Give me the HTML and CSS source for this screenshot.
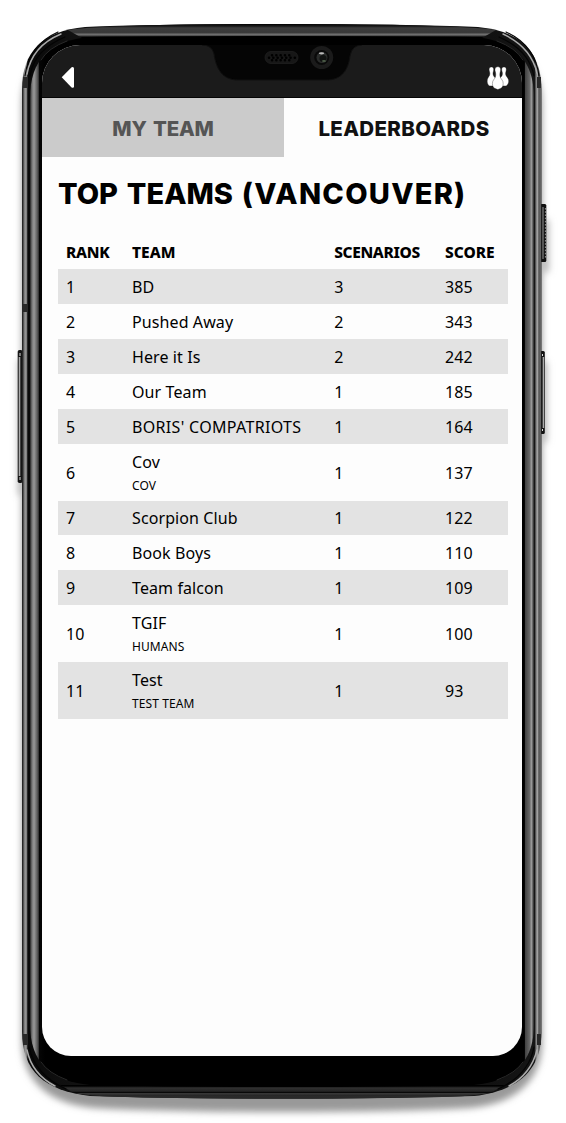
FILE: index.html
```html
<!DOCTYPE html>
<html lang="en">
<head>
<meta charset="utf-8">
<title>Leaderboards</title>
<link rel="stylesheet" href="styles.css">
</head>
<body>
<div class="phone">
  <svg class="frame" viewBox="0 0 566 1123" aria-hidden="true">
    <defs>
      <linearGradient id="rim" gradientUnits="userSpaceOnUse" x1="22" x2="542" y1="0" y2="0">
        <stop offset="0" stop-color="#111"/><stop offset=".003" stop-color="#555"/><stop offset=".006" stop-color="#9a9a9a"/><stop offset=".0095" stop-color="#777"/><stop offset=".011" stop-color="#0a0a0a"/><stop offset=".1" stop-color="#111"/>
        <stop offset=".9" stop-color="#111"/><stop offset=".986" stop-color="#151515"/><stop offset=".988" stop-color="#666"/><stop offset=".991" stop-color="#aaa"/><stop offset=".994" stop-color="#555"/><stop offset=".997" stop-color="#666"/><stop offset="1" stop-color="#080808"/>
      </linearGradient>
      <linearGradient id="glass" gradientUnits="userSpaceOnUse" x1="30" x2="534" y1="0" y2="0">
        <stop offset="0" stop-color="#222"/><stop offset=".004" stop-color="#777"/><stop offset=".008" stop-color="#999"/><stop offset=".014" stop-color="#606060"/><stop offset=".0165" stop-color="#444"/><stop offset=".0185" stop-color="#050505"/><stop offset=".03" stop-color="#000"/>
        <stop offset=".97" stop-color="#000"/><stop offset=".981" stop-color="#000"/><stop offset=".983" stop-color="#444"/><stop offset=".991" stop-color="#666"/><stop offset=".995" stop-color="#999"/><stop offset=".998" stop-color="#555"/><stop offset="1" stop-color="#222"/>
      </linearGradient>
      <linearGradient id="top" gradientUnits="userSpaceOnUse" x1="0" x2="0" y1="24" y2="37">
        <stop offset="0" stop-color="#000"/><stop offset=".2" stop-color="#222"/><stop offset=".3" stop-color="#3d3d3d"/><stop offset=".65" stop-color="#383838"/><stop offset=".8" stop-color="#707070"/><stop offset=".92" stop-color="#444"/><stop offset="1" stop-color="#000"/>
      </linearGradient>
      <linearGradient id="bottom" gradientUnits="userSpaceOnUse" x1="0" x2="0" y1="1086" y2="1099">
        <stop offset="0" stop-color="#000"/><stop offset=".15" stop-color="#303030"/><stop offset=".4" stop-color="#242424"/><stop offset=".5" stop-color="#080808"/><stop offset=".58" stop-color="#383838"/><stop offset=".78" stop-color="#222"/><stop offset=".85" stop-color="#353535"/><stop offset="1" stop-color="#000"/>
      </linearGradient>
      <filter id="soft" x="-10%" y="-10%" width="120%" height="120%"><feGaussianBlur stdDeviation="3.5"/></filter>
    </defs>
    <path class="shadow" filter="url(#soft)" d="M22 104C22 66 45 43 85 39H479C519 43 542 66 542 104V1042C542 1080 516 1104 470 1108Q400 1112 282 1112T94 1108C48 1104 22 1080 22 1042Z"/>
    <g class="button-shadow" filter="url(#soft)"><path d="M18 360h6v135h-6zM540 220h9v52h-9zM540 362h7v80h-7z"/></g>
    <g>
      <rect x="17.7" y="350" width="5" height="133" rx="1.8" fill="#151515"/><path d="M19.5 357v119" stroke="#aaa" stroke-width="1.6"/><path d="M20 353v3M20 477v3" stroke="#ddd"/>
      <rect x="540" y="204" width="6.3" height="58" rx="1.5" fill="#111"/><path d="M543 207v52" stroke="#555" stroke-width="2"/><path d="M545.4 208v51" stroke="#999" stroke-dasharray="1.6 1.6"/>
      <rect x="540" y="351" width="4.8" height="83" rx="1.5" fill="#111"/><path d="M543.4 357v71" stroke="#aaa" stroke-width="1.5"/><path d="M542.5 354v2M542.5 429v2" stroke="#ddd"/>
    </g>
    <path fill="url(#rim)" d="M22 90C22 52 42 31 85 27Q155 24 282 24T478 27C521 31 541.5 52 541.5 90V1032C541.5 1070 518 1091 474 1096Q400 1098.5 282 1098.5T90 1096C44 1091 22 1070 22 1032Z"/>
    <path fill="url(#top)" d="M68 30Q110 24 282 24T496 30L482 38H82Z"/>
    <path fill="url(#bottom)" d="M60 1085H505L490 1093Q474 1096 450 1096.7Q390 1098.5 282 1098.5T115 1096.7Q90 1096 74 1093Z"/>
    <path fill="url(#glass)" d="M30 98C30 60 50 40 90 37Q155 36 282 36T474 37C514 40 534 60 534 98V1024C534 1062 514 1081 474 1085Q400 1087 282 1087T90 1085C50 1081 30 1062 30 1024Z"/>
    <g fill="none" stroke-linecap="round">
      <path class="shine" d="M27 74Q32 46 61 34M503 34Q531 47 537 73M27 1050Q32 1074 55 1086M537 1050Q531 1074 509 1086"/>
      <path class="groove" d="M25 76Q29 45 58 32M506 32Q535 45 539 76M30 76Q34 50 65 37M499 37Q529 50 534 76M29 1047Q35 1075 66 1089M534 1047Q529 1075 498 1089"/>
      <path class="reflect" d="M41 60Q48 48 67 41M523 60Q516 48 497 41M41 1062Q48 1073 67 1080M523 1062Q516 1073 497 1080"/>
    </g>
    <path fill="#292929" d="M23 77h4v11h-4zM537 77h4v11h-4zM23 1034h4v11h-4zM537 1034h4v11h-4zM23 304h4v8h-4z"/>
  </svg>
  <main class="screen">
    <header class="bar">
      <svg class="back" viewBox="0 0 14 23" aria-label="Back"><path d="M.7 11.3L10.6 1.2Q13 .4 13 2.6V20.2Q13 22.4 10.6 21.4Z"/></svg>
      <svg class="pins" viewBox="0 0 22 24" aria-label="Teams">
        <g fill="#fff" stroke="#1b1b1b" stroke-width=".35">
          <path d="M4.4.9C2.2.9 1.8 3 2.3 5C3 7 3 8 2.5 9.4C1.6 11.3 .2 12 .2 15.2C.2 17.7 1.2 19.4 2.6 19.9H7.5C9 19 9.5 17 9.5 15C9.5 12 7.2 11.4 6.4 9.4C5.8 8 5.9 7 6.5 5C7 3 6.6.9 4.4.9Z"/>
          <path d="M17 .9C14.8.9 14.4 3 14.9 5C15.6 7 15.6 8 15.1 9.4C14.2 11.3 12.1 12 12.1 15.2C12.1 17.7 13.4 19.4 14.5 19.9H19.2C20.7 19.2 21.7 17 21.7 15C21.7 12 19.8 11.4 19 9.4C18.4 8 18.5 7 19.1 5C19.6 3 19.2.9 17 .9Z"/>
          <path d="M10.8.7C8.1.7 7.6 3 8.2 5.3C8.9 7.5 8.9 9.3 8.4 11C7.5 13.4 5.4 14.2 5.4 17.5C5.4 20 6.4 21.6 7.6 22.2L10.8 23.6L14 22.2C15.2 21.6 16.2 20 16.2 17.5C16.2 14.2 14.1 13.4 13.2 11C12.7 9.3 12.7 7.5 13.4 5.3C14 3 13.5.7 10.8.7Z"/>
        </g>
      </svg>
      <svg class="notch" viewBox="0 0 160 36" aria-hidden="true">
        <path fill="#050505" stroke="#101010" d="M0 0Q10 0 12 9C14 23 20 35 36 35H124C140 35 146 25 148 11Q150 0 160 0V-2H0Z"/>
        <rect x="63" y="6.5" width="33" height="12" rx="6" fill="#171717" stroke="#222" stroke-width=".7"/>
        <path d="M70 10.3h20M67 12.8h26M70 15.3h20" stroke="#000" stroke-width="2.5" stroke-linecap="round" stroke-dasharray=".1 4.2"/>
        <circle cx="119.7" cy="12.5" r="11.5" fill="#1b1b1b"/><circle cx="119.7" cy="12.5" r="7.5" fill="#090909"/><circle cx="120" cy="12.5" r="5.5" fill="#2b2d2c"/><circle cx="121" cy="13.5" r="3.5" fill="#101211"/><ellipse cx="119.5" cy="8.3" rx="2.7" ry="1.1" fill="#bbb"/><ellipse cx="122" cy="16" rx="2" ry="1.1" fill="#4c5d48"/>
      </svg>
    </header>
    <nav class="tabs"><div class="tab"><span class="my">MY TEAM</span></div><div class="tab active"><span class="lead">LEADERBOARDS</span></div></nav>
    <section class="content">
      <h1 class="title"><span>TOP TEAMS <span class="city">(VANCOUVER)</span></span></h1>
      <div class="row head"><span class="h-rank">RANK</span><span class="h-team">TEAM</span><span class="h-scen">SCENARIOS</span><span class="h-score">SCORE</span></div>
      <div class="row first"><span>1</span><span>BD</span><span>3</span><span>385</span></div>
      <div class="row"><span>2</span><span>Pushed Away</span><span>2</span><span>343</span></div>
      <div class="row"><span>3</span><span>Here it Is</span><span>2</span><span>242</span></div>
      <div class="row"><span>4</span><span>Our Team</span><span>1</span><span>185</span></div>
      <div class="row"><span>5</span><span class="caps">BORIS' COMPATRIOTS</span><span>1</span><span>164</span></div>
      <div class="row tall"><span>6</span><span class="team">Cov<small>COV</small></span><span>1</span><span>137</span></div>
      <div class="row"><span>7</span><span>Scorpion Club</span><span>1</span><span>122</span></div>
      <div class="row"><span>8</span><span>Book Boys</span><span>1</span><span>110</span></div>
      <div class="row"><span>9</span><span>Team falcon</span><span>1</span><span>109</span></div>
      <div class="row tall"><span>10</span><span class="team">TGIF<small>HUMANS</small></span><span>1</span><span>100</span></div>
      <div class="row tall"><span>11</span><span class="team">Test<small>TEST TEAM</small></span><span>1</span><span>93</span></div>
    </section>
  </main>
</div>
</body>
</html>
```
FILE: styles.css
```css
* { box-sizing: border-box; }
body { margin: 0; background: #fff; color: #000; font-family: "Noto Sans", sans-serif; }
.phone { position: relative; width: 566px; height: 1123px; padding: 45px 44px 67px 42px; overflow: hidden; }
.frame { position: absolute; inset: 0; width: 566px; height: 1123px; }
.shadow { fill: #999; }
.button-shadow { fill: #bbb; }
.shine { stroke: #aaa; stroke-width: 1.5; }
.groove { stroke: #050505; stroke-width: 1.2; }
.reflect { stroke: #292929; stroke-width: 1; }
.screen { position: relative; height: 1011px; background: #fdfdfd; border-radius: 38px 38px 29px 29px; overflow: hidden; }
.bar { position: relative; display: flex; justify-content: space-between; height: 53px; padding: 21px 13.5px 0 19px; background: #1b1b1b; border-bottom: 1px solid #050505; }
.back { width: 14px; height: 23px; fill: #fff; }
.pins { width: 22px; height: 24px; }
.notch { position: absolute; left: 160px; top: 0; width: 160px; height: 36px; }
.tabs { display: flex; height: 59px; }
.tab { flex: 0 0 242px; display: flex; align-items: center; justify-content: center; background: #cbcbcb; color: #555; font-family: Inter, sans-serif; font-size: 20.5px; font-weight: 800; line-height: 27px; padding-top: 2px; }
.active { flex: 1; background: #fdfdfd; color: #111; }
.my { letter-spacing: -.2px; word-spacing: 2px; }
.lead { letter-spacing: .35px; padding-left: 2px; }
.content { padding: 0 14px 0 16px; }
.title { display: flex; align-items: center; height: 72px; margin: 0; padding-top: 1px; color: #000; font-family: Inter, sans-serif; font-size: 29px; font-weight: 800; line-height: 40px; letter-spacing: 0; word-spacing: 2.5px; white-space: nowrap; }
.city { letter-spacing: 1.25px; }
.row { display: grid; grid-template-columns: 66px 202.2px 110.8px 1fr; align-items: center; height: 34.8px; padding: .8px 0 0 8px; font-size: 16px; line-height: 24px; letter-spacing: .1px; white-space: nowrap; }
.row:nth-child(odd) { background: #e3e3e3; }
.head { height: 40.4px; padding-top: 6px; font-size: 15.5px; font-weight: 800; letter-spacing: -.25px; }
.h-team, .h-score { letter-spacing: 0; }
.h-scen { letter-spacing: -.35px; }
.caps { letter-spacing: .32px; }
.first { height: 35px; padding-top: 0; }
.tall { height: 57px; padding-top: 1px; }
.team { padding-top: 2px; }
small { display: block; font-size: 12px; line-height: 24px; }
```
